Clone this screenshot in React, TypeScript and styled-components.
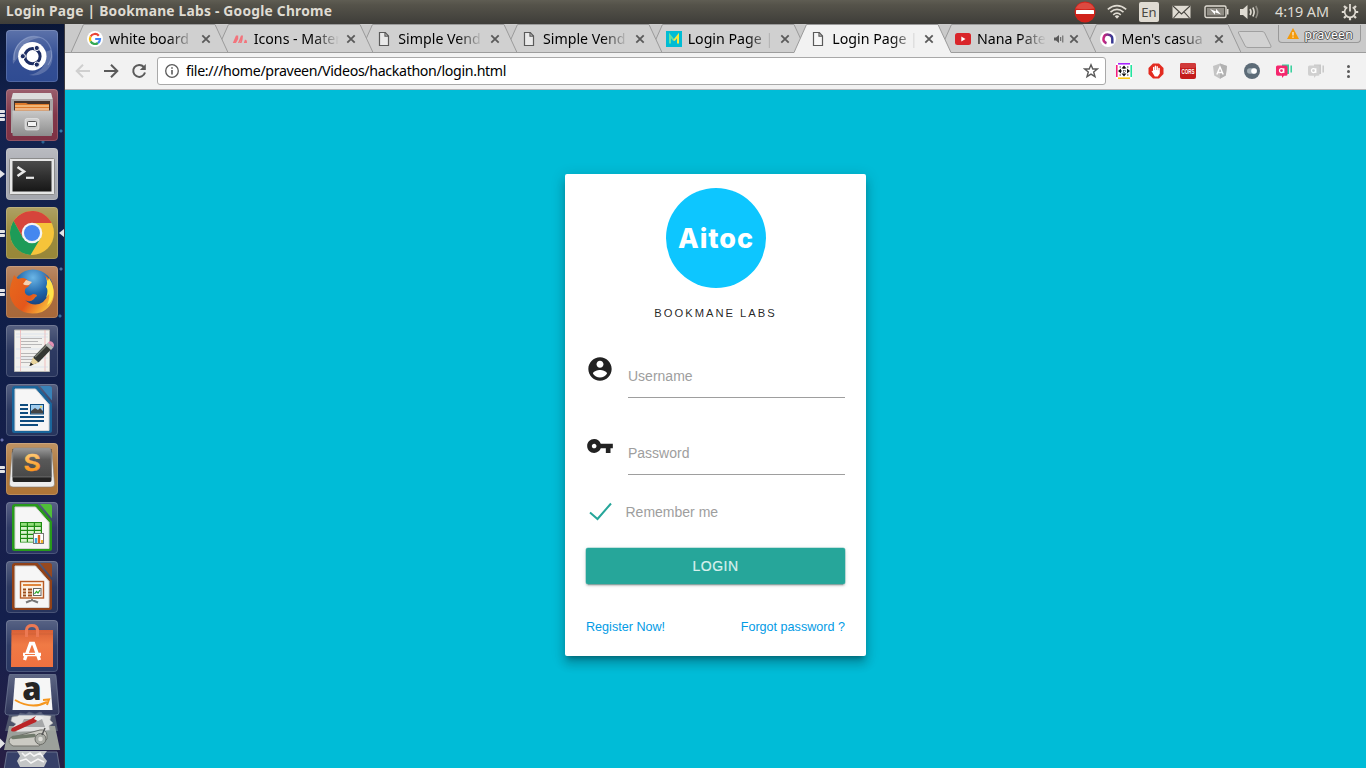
import React from "react";
import styled, { createGlobalStyle, css } from "styled-components";

const GlobalStyle = createGlobalStyle`
  * { box-sizing: border-box; }
  html, body { margin: 0; padding: 0; }
  body { overflow: hidden; font-family: "Liberation Sans", Arial, sans-serif; }
  svg { display: block; flex: none; }
`;

const uiFont = css`
  font-family: "Noto Sans", "Open Sans", sans-serif;
`;

const Desktop = styled.div`
  width: 1366px;
  height: 768px;
  display: flex;
  flex-direction: column;
  background: #00bcd7;
`;

/* ---------- top panel ---------- */

const Panel = styled.header`
  ${uiFont}
  height: 24px;
  flex: none;
  display: flex;
  align-items: center;
  justify-content: space-between;
  padding: 0 7px 0 6px;
  background: linear-gradient(#5f5d53, #55534a 20%, #3e3d39);
  color: #dfdbd2;
`;

const WindowTitle = styled.div`
  padding-bottom: 2px;
  font-size: 13.8px;
  font-weight: 700;
  line-height: 20px;
  letter-spacing: 0.22px;
  white-space: nowrap;
`;

const Indicators = styled.div`
  display: flex;
  align-items: center;
`;

const Indicator = styled.div<{ $gap: number }>`
  margin-left: ${(p) => p.$gap}px;
`;

const Language = styled.div`
  width: 20px;
  height: 20px;
  border-radius: 2px;
  background: #dfdbd2;
  color: #4a4842;
  font-size: 13px;
  line-height: 21px;
  text-align: center;
`;

const Clock = styled.div`
  width: 54px;
  font-size: 14.4px;
  line-height: 20px;
  letter-spacing: -0.1px;
  white-space: nowrap;
`;

const Workspace = styled.div`
  flex: 1;
  min-height: 0;
  display: flex;
`;

/* ---------- launcher ---------- */

const Launcher = styled.nav`
  width: 65px;
  flex: none;
  display: flex;
  flex-direction: column;
  padding-top: 6px;
  border-right: 1px solid #3b3a40;
  overflow: hidden;
  background:
    radial-gradient(circle at 61px 107px, #3579a8 0 1px, transparent 2px),
    radial-gradient(circle at 43px 118px, #2d6594 0 1px, transparent 2px),
    radial-gradient(circle at 61px 245px, #52729b 0 1px, transparent 2px),
    radial-gradient(circle at 60px 292px, #3a6f9d 0 1px, transparent 2px),
    radial-gradient(circle at 2px 416px, #6a72b0 0 1px, transparent 2px),
    linear-gradient(#091637, #14234f 12%, #101e48 45%, #191f4c 65%, #14204d 80%, #281f44);
`;

const LaunchRow = styled.div`
  height: 52px;
  flex: none;
  display: flex;
  align-items: center;
  margin-bottom: 7px;
`;

const FoldedApps = styled.div`
  flex: none;
  margin-top: -5px;
`;

const Pips = styled.div`
  width: 6px;
  flex: none;
  display: flex;
  flex-direction: column;
  gap: 1px;
`;

const Pip = styled.i`
  width: 5px;
  height: 3px;
  background: #e3e3e6;
  border-radius: 0 1px 1px 0;
`;

const Arrow = styled.i<{ $left?: boolean }>`
  width: 0;
  height: 0;
  border: 4px solid transparent;
  ${(p) =>
    p.$left
      ? css`border-right: 5px solid #e3e3e6; border-left: 0; margin-left: 1px;`
      : css`border-left: 5px solid #e3e3e6; border-right: 0;`}
`;

const Tile = styled.div<{ $tint: string }>`
  width: 52px;
  height: 52px;
  flex: none;
  border-radius: 4px;
  background: linear-gradient(rgba(255, 255, 255, 0.22), rgba(255, 255, 255, 0.03) 50%, transparent), ${(p) => p.$tint};
  box-shadow: inset 0 0 0 1px rgba(255, 255, 255, 0.16);
`;

/* ---------- browser ---------- */

const Browser = styled.div`
  flex: 1;
  min-width: 0;
  display: flex;
  flex-direction: column;
`;

const TabStrip = styled.div`
  ${uiFont}
  height: 29px;
  flex: none;
  display: flex;
  padding-left: 6px;
  background: #cacaca;
  box-shadow: inset 0 -1px #9d9d9d;
`;

const Tab = styled.div<{ $order: number }>`
  position: relative;
  z-index: ${(p) => p.$order};
  width: 157px;
  height: 29px;
  flex: none;
  display: flex;
  align-items: center;
  padding: 1px 17px 0 16px;
  & + & { margin-left: -12.35px; }
`;

const TabShape = styled.svg`
  position: absolute;
  inset: 0;
  z-index: -1;
`;

const TabLabel = styled.div<{ $width: number }>`
  width: ${(p) => p.$width}px;
  flex: none;
  margin-left: 6px;
  overflow: hidden;
  white-space: nowrap;
  font-size: 14.2px;
  letter-spacing: 0;
  line-height: 20px;
  color: #000;
  mask-image: linear-gradient(to right, #000 calc(100% - 26px), transparent);
`;

const TabTools = styled.div`
  display: flex;
  align-items: center;
  gap: 5px;
  margin-left: auto;
`;

const NewTab = styled.div`
  margin: 6px 0 0 -4px;
`;

const Profile = styled.div`
  width: 83px;
  height: 18px;
  margin: 1px 0 0 5px;
  display: flex;
  align-items: center;
  gap: 6px;
  padding-left: 8px;
  border: 1px solid #999;
  border-top: 0;
  border-radius: 0 0 4px 4px;
  background: #c9c9c9;
`;

const ProfileName = styled.span`
  padding-top: 3px;
  font-size: 12px;
  letter-spacing: 0.35px;
  line-height: 16px;
  color: #fff;
  text-shadow: 1px 0 #555, -1px 0 #555, 0 1px #555, 0 -1px #555;
`;

const Toolbar = styled.div`
  height: 37px;
  flex: none;
  display: flex;
  align-items: center;
  padding: 0 8px 0 8px;
  background: #f2f2f2;
  border-bottom: 1px solid #b6b4b6;
`;

const NavButtons = styled.div`
  display: flex;
  gap: 8px;
`;

const Address = styled.div`
  ${uiFont}
  width: 949px;
  height: 28px;
  margin-left: 8px;
  display: flex;
  align-items: center;
  padding: 0 6px;
  border: 1px solid #a9a9a9;
  border-radius: 3px;
  background: #fff;
`;

const Url = styled.div`
  flex: 1;
  margin-left: 6px;
  font-size: 14.2px;
  line-height: 20px;
  letter-spacing: -0.34px;
  color: #000;
`;

const Extensions = styled.div`
  display: flex;
  gap: 16px;
  margin-left: 10px;
`;

/* ---------- page ---------- */

const Page = styled.main`
  flex: 1;
  display: flex;
  justify-content: center;
  align-items: flex-start;
  padding-top: 84px;
  background: #00bcd7;
`;

const Card = styled.form`
  width: 301px;
  height: 482px;
  display: flex;
  flex-direction: column;
  padding: 14px 21px 0;
  border-radius: 2px;
  background: #fff;
  box-shadow: 0 8px 10px 1px rgba(0, 0, 0, 0.14), 0 3px 14px 2px rgba(0, 0, 0, 0.12), 0 5px 5px -3px rgba(0, 0, 0, 0.3);
`;

const Logo = styled.div`
  width: 100px;
  height: 100px;
  margin: 0 auto;
  border-radius: 50%;
  background: #0dc6ff;
  color: #fff;
  font: 800 27px/101px Inter, sans-serif;
  letter-spacing: 0.9px;
  text-indent: 1px;
  text-align: center;
`;

const Brand = styled.p`
  margin: 17px 0 0;
  font-size: 11.2px;
  line-height: 17px;
  letter-spacing: 2px;
  text-align: center;
  color: rgba(0, 0, 0, 0.87);
`;

const Field = styled.label<{ $top: number }>`
  display: flex;
  justify-content: space-between;
  height: 43px;
  margin-top: ${(p) => p.$top}px;
`;

const FieldInput = styled.span`
  width: 217px;
  height: 43px;
  padding-top: 10px;
  border-bottom: 1px solid #9e9e9e;
  font-size: 14px;
  line-height: 23px;
  color: #9e9e9e;
`;

const Remember = styled.label`
  display: flex;
  align-items: center;
  height: 24px;
  margin-top: 25px;
  gap: 13.5px;
  padding-left: 3px;
  font-size: 14px;
  color: #9e9e9e;
`;

const LoginButton = styled.button`
  width: 259px;
  height: 36px;
  flex: none;
  margin-top: 24px;
  padding: 0;
  border: 0;
  border-radius: 2px;
  background: #26a69a;
  color: #d8f0ed;
  font: 14px/36px "Liberation Sans", Arial, sans-serif;
  letter-spacing: 0.5px;
  -webkit-text-stroke: 0.2px #d8f0ed;
  box-shadow: 0 0 0 0.5px rgba(38, 166, 154, 0.5), 0 2px 2px 0 rgba(0, 0, 0, 0.14), 0 1px 5px 0 rgba(0, 0, 0, 0.12), 0 3px 1px -2px rgba(0, 0, 0, 0.2);
`;

const Links = styled.div`
  display: flex;
  justify-content: space-between;
  margin-top: 34px;
  font-size: 12.6px;
  line-height: 18px;
`;

const Link = styled.a`
  color: #039be5;
`;

/* ---------- launcher drawings ---------- */

const UbuntuIcon = () => (
  <svg width="52" height="52" viewBox="0 0 52 52" fill="none">
    <path d="M8 30C7 14 20 4 33 7C44 10 50 24 42 35" stroke="#b9c8ea" strokeOpacity=".35" strokeWidth="1.2" />
    <path d="M7 34C5 14 20 3 35 8C25 8 16 14 13 26ZM45 20C51 35 38 48 23 45C35 43 42 34 39 22Z" fill="#fff" fillOpacity=".2" />
    <circle cx="26.3" cy="26.3" r="14.2" fill="#fff" />
    <circle cx="26.5" cy="26.2" r="7.6" stroke="#1c2d63" strokeWidth="3" />
    <g fill="#1c2d63" stroke="#fff" strokeWidth="1">
      <circle cx="30.8" cy="18" r="2.6" />
      <circle cx="30.8" cy="34.6" r="2.6" />
      <circle cx="16.8" cy="26.2" r="2.6" />
    </g>
  </svg>
);

const FilesIcon = () => (
  <svg width="52" height="52" viewBox="0 0 52 52">
    <defs>
      <linearGradient id="cab" x1="0" y1="0" x2="0" y2="1"><stop offset="0" stopColor="#c9c9c9" /><stop offset="1" stopColor="#8d8d8d" /></linearGradient>
    </defs>
    <path d="M7 4H45L47 11V44H5V11Z" fill="#a9a5a5" />
    <path d="M7 4H45L46.5 10H5.5Z" fill="#dcdcdc" />
    <rect x="8" y="12" width="36" height="11" fill="#44332b" />
    <path d="M9 14H20L22 15H43V22H9Z" fill="#df7b2b" />
    <path d="M9 17H43" stroke="#f7c98e" strokeWidth="1.5" />
    <path d="M9 20H43" stroke="#fff1dc" strokeWidth="1.2" />
    <rect x="6.5" y="21.5" width="39.5" height="25.5" rx="1" fill="url(#cab)" />
    <rect x="19" y="29.5" width="14" height="11.5" rx="2" fill="#d0d0d0" stroke="#ededed" strokeWidth=".6" />
    <rect x="21.5" y="32.5" width="9" height="5" rx="1" fill="#f3f3f3" stroke="#555" strokeWidth="1" />
  </svg>
);

const TerminalIcon = () => (
  <svg width="52" height="52" viewBox="0 0 52 52" fill="none">
    <defs>
      <linearGradient id="scr" x1="0" y1="0" x2="0" y2="1"><stop offset="0" stopColor="#4b4b4b" /><stop offset=".5" stopColor="#303030" /><stop offset="1" stopColor="#171717" /></linearGradient>
    </defs>
    <rect x="3.5" y="10.5" width="45" height="36" rx="1" fill="#e6e6e6" stroke="#8b8b8b" />
    <rect x="6.5" y="13" width="39" height="30.5" fill="url(#scr)" />
    <path d="M11.5 19L18 23.5L11.5 28" stroke="#e9e9e9" strokeWidth="2.6" />
    <path d="M20 29.8H28" stroke="#e9e9e9" strokeWidth="2.2" />
  </svg>
);

const ChromeIcon = () => (
  <svg width="52" height="52" viewBox="0 0 52 52">
    <circle cx="26" cy="26" r="22" fill="#f6c43a" />
    <path d="M26 26V16H45.6A22 22 0 0 0 7.6 14L17 31Z" fill="#d6453b" />
    <path d="M7.6 14A22 22 0 0 0 24.5 48L34.7 31L26 26L17 31Z" fill="#1d9b58" />
    <circle cx="26" cy="26" r="10.3" fill="#f4f4f4" />
    <circle cx="26" cy="26" r="8" fill="#4587ef" />
  </svg>
);

const FirefoxIcon = () => (
  <svg width="52" height="52" viewBox="0 0 52 52">
    <defs>
      <radialGradient id="ffb" cx=".5" cy=".2" r=".8"><stop offset="0" stopColor="#6bb6e6" /><stop offset=".5" stopColor="#1f66ab" /><stop offset="1" stopColor="#143167" /></radialGradient>
      <linearGradient id="ffo" x1="0" y1="0" x2="1" y2=".6"><stop offset="0" stopColor="#e66a1d" /><stop offset=".6" stopColor="#e4571b" /><stop offset="1" stopColor="#f9b93a" /></linearGradient>
    </defs>
    <circle cx="27" cy="24" r="20.5" fill="url(#ffb)" />
    <path d="M8 9L12 13Q17 11 20 13L25 17L22 21Q18 22 19 27Q22 32 27 28Q31 28 31 30Q29 31 28 33Q24 37 19 34Q28 42 37 36Q45 29 42 18Q41 11 37 8Q46 13 48 24Q49 39 36 46Q20 51 9 40Q1 30 5 18Z" fill="url(#ffo)" />
    <path d="M40 11L42 15L43 12Q49 21 47 31Q45 37 41 39Q44 32 43 28L40 32Q43 24 40 21Q42 17 40 11Z" fill="#ffe34a" />
    <path d="M20 14L26 16L23 19Q19 20 17 18Z" fill="#f4d1b0" />
  </svg>
);

const EditorIcon = () => (
  <svg width="52" height="52" viewBox="0 0 52 52" fill="none">
    <path d="M8.5 5H43.5V46.5H8.5Z" fill="#f2f1ee" stroke="#b7b7b4" />
    <path d="M14.5 5V46M39 5V46" stroke="#f0aaaa" strokeWidth=".7" />
    <path d="M10 9H42M10 12H42M10 24H42M10 33H42M10 42H42" stroke="#c4d5e8" strokeWidth=".5" />
    <path d="M15 13.5H36M15 16.5H32M15 19.5H36M15 22.5H25M15 28.5H33M15 31.5H36M15 34.5H28M15 37.5H25" stroke="#a8a8a8" strokeWidth=".8" />
    <path d="M23.5 41L28 31.5L40 19L45.5 24L33 37Z" fill="#333632" />
    <path d="M29 32L41 20" stroke="#777b70" strokeWidth="1.5" />
    <path d="M23.5 41L27 32.5L32.5 37.5Z" fill="#e9d49c" />
    <path d="M23.5 41L24.8 37.5L27.2 39.7Z" fill="#222" />
    <path d="M39.5 20L42 17.5L47.3 22.5L45 25Z" fill="#b7bab8" />
    <path d="M42 17.5Q45 15 47.3 18Q49 20 47.3 22.5Z" fill="#e391b4" />
  </svg>
);

const DocShell: React.FC<{ color: string; fold: string; children: React.ReactNode }> = ({ color, fold, children }) => (
  <svg width="52" height="52" viewBox="0 0 52 52" fill="none">
    <path d="M9 2H31.5L46 19.5V46.5Q46 49 43.5 49H8.5Q6 49 6 46.5V5Q6 2 9 2Z" fill={color} />
    <path d="M9 5H29.5L43 20.5V46.5H9Z" fill="#f6f6f6" stroke="#d4d4d4" />
    <path d="M34 2H43.5Q46 2 46 4.5V16.5Z" fill={fold} />
    {children}
  </svg>
);

const WriterIcon = () => (
  <DocShell color="#1a659b" fold="#3982b8">
    <path d="M14 21H22M14 25H22M14 29H22M14 33H38M14 37H38M14 41H32" stroke="#0f4c7e" strokeWidth="1.8" />
    <rect x="24.5" y="20.5" width="13" height="9.5" fill="#9fcbed" stroke="#0f4c7e" />
    <path d="M25 29.5V27L29 24L32 26L34 24L37 27V29.5Z" fill="#444" />
    <circle cx="35" cy="22.7" r="1" fill="#f5d64d" />
  </DocShell>
);

const CalcIcon = () => (
  <DocShell color="#279a1b" fold="#4fbf38">
    <rect x="14" y="20" width="22" height="20.5" fill="#1d8a13" />
    {[0, 1, 2, 3, 4].map((r) =>
      [0, 1, 2].map((c) => (
        <rect key={`${r}${c}`} x={15 + c * 7} y={21 + r * 4} width="5.8" height="2.8" fill={r === 0 ? "#92dd7b" : "#d8f3cd"} />
      ))
    )}
    <rect x="27.5" y="31.5" width="10" height="10" fill="#fff" stroke="#777" />
    <path d="M30 41V36" stroke="#3ba4dc" strokeWidth="2.4" />
    <path d="M33 41V33" stroke="#d9651e" strokeWidth="2.4" />
    <path d="M36 41V38" stroke="#f1b62c" strokeWidth="2" />
  </DocShell>
);

const ImpressIcon = () => (
  <DocShell color="#924218" fold="#97491f">
    <rect x="14.5" y="20.5" width="23" height="16.5" fill="#fdf1e4" stroke="#b65a24" strokeWidth="1.4" />
    <path d="M17 24H35" stroke="#e0863d" strokeWidth="2" />
    <path d="M17 28.5H20M22 28.5H26M17 31.5H20M22 31.5H26M17 34.5H20M22 34.5H26" stroke="#9b4d1b" strokeWidth="1.8" />
    <rect x="27.5" y="27.5" width="7.5" height="7" fill="#fff" stroke="#666" />
    <path d="M28.5 33L30.5 30.5L32 32L34 29" stroke="#2aa52a" strokeWidth="1.2" />
    <path d="M26 38V39L20 41.5M26 39L32 41.5" stroke="#777" strokeWidth="2" />
  </DocShell>
);

const SublimeIcon = () => (
  <svg width="52" height="52" viewBox="0 0 52 52">
    <defs>
      <linearGradient id="key" x1="0" y1="0" x2="0" y2="1"><stop offset="0" stopColor="#9a9a9a" /><stop offset=".4" stopColor="#595959" /><stop offset="1" stopColor="#484848" /></linearGradient>
      <linearGradient id="sg" x1="0" y1="0" x2="0" y2="1"><stop offset="0" stopColor="#ffd68a" /><stop offset="1" stopColor="#ff8600" /></linearGradient>
    </defs>
    <path d="M6 9L3.5 41Q3.5 44 7 44H45Q48.500 44 48.500 41L46 9Z" fill="#ededed" stroke="#817b72" strokeWidth=".6" />
    <path d="M6.5 6H45.5V37Q45.500 39 44 39H8Q6.500 39 6.500 37Z" fill="#222" />
    <path d="M9 5H43Q45 5 45 7L45.700 34H6.300L7 7Q7 5 9 5Z" fill="url(#key)" stroke="#8a8a8a" strokeWidth=".6" />
    <text x="26" y="28" textAnchor="middle" fontFamily="Inter, sans-serif" fontSize="23" fontWeight="600" fill="url(#sg)" stroke="url(#sg)" strokeWidth=".4" transform="translate(-3.9 0) scale(1.15 1)">S</text>
  </svg>
);

const SoftwareIcon = () => (
  <svg width="52" height="52" viewBox="0 0 52 52" fill="none">
    <defs>
      <linearGradient id="bag" x1="0" y1="0" x2="0" y2="1"><stop offset="0" stopColor="#d96137" /><stop offset=".4" stopColor="#f07a45" /><stop offset="1" stopColor="#ef7140" /></linearGradient>
    </defs>
    <path d="M5.5 10H47V47H5Z" fill="url(#bag)" />
    <path d="M5 14H47" stroke="#c95e37" strokeWidth=".7" />
    <path d="M20.5 17V10Q21 5.500 26 5.500Q31 5.500 31.500 10V17" stroke="#ec7953" strokeWidth="3" />
    <path d="M18.5 40L24.5 23.500H27.500L33.500 40M17 34.500H35" stroke="#fff" strokeWidth="3.3" />
    <path d="M19 34.500H29" stroke="#f07a45" strokeWidth="1" />
  </svg>
);

const LauncherStack = () => (
  <svg width="64" height="96" viewBox="0 0 64 96" fill="none">
    <defs>
      <linearGradient id="plate" x1="0" y1="0" x2="0" y2="1"><stop offset="0" stopColor="#757f98" /><stop offset="1" stopColor="#333c60" /></linearGradient>
    </defs>
    <path d="M7 78H57L60 96H4Z" fill="#39466e" fillOpacity=".85" stroke="#69728c" />
    <path d="M17 77H47L43 82L47 87L44 93H20L17 87L20 82Z" fill="#c4c6c7" />
    <path d="M22 79L25 82L30 79L34 82L40 79L43 83M20 87L26 85L31 89L38 85L44 88" stroke="#f6f6f6" strokeWidth="1.5" />
    <path d="M9 41H55L58 57H5Z" fill="#4d546b" />
    <path d="M9 52H55L60 76H4Z" fill="#a2a8a0" fillOpacity=".95" />
    <path d="M12 43L18 42L20 39L26 40L29 38L35 40L40 38L44 41L51 42L50 46L53 49L49 52L50 56L44 57L17 58L12 54L16 50L11 47Z" fill="#e0e0e0" stroke="#aaa" strokeWidth=".6" />
    <path d="M24 45H42L45 53H20Z" fill="#a5a6a8" />
    <path d="M12 54L31 45L36 42L38 44L36 48L16 57Q9 59 12 54Z" fill="#bb2427" />
    <path d="M34 45L37 40L42 38L40 42L44 44L38 47Z" fill="#ececec" />
    <path d="M13 63L40 56Q46 55 47 61V65L39 72H13Q7 69 10 64Z" fill="#cbcac3" stroke="#72736d" strokeWidth="1" />
    <path d="M13 63.500L34 61.500" stroke="#717a6c" strokeWidth="3.5" strokeLinecap="round" />
    <circle cx="40.5" cy="65" r="5.5" fill="#a9aba4" stroke="#6b6c67" />
    <circle cx="40.5" cy="65" r="2.3" fill="#deddd7" />
    <path d="M42 61L45 54" stroke="#555" strokeWidth="1.5" />
    <path d="M10 0H54Q56 0 56 2L59 38Q59 41 56 41H8Q5 41 5 38L9 2Z" fill="url(#plate)" fillOpacity=".75" stroke="#747e98" strokeOpacity=".7" />
    <path d="M15 4H50L52.500 36H12.500Z" fill="#f6f6f6" />
    <text x="32" y="26" textAnchor="middle" fontFamily="Open Sans, sans-serif" fontWeight="800" fontSize="31" fill="#252525">a</text>
    <path d="M15 26Q32 36 47 28M43 26L49 25.500L47 31" stroke="#f5961e" strokeWidth="2" />
    <path d="M0 64.500L5 69.500L0 74.500Z" fill="#e2e2e4" />
  </svg>
);

/* ---------- panel drawings ---------- */

const NoEntry = () => (
  <svg width="22" height="22" viewBox="0 0 22 22">
    <circle cx="11" cy="11" r="10.5" fill="#d0221a" />
    <path d="M1.5 7.5A10.5 10.5 0 0 1 20.5 7.5Q11 9 1.5 7.5Z" fill="#dd4a40" />
    <rect x="2" y="9" width="18" height="4" rx=".5" fill="#fff" />
  </svg>
);

const Wifi = () => (
  <svg width="20" height="16" viewBox="0 0 20 16" fill="none" stroke="#dfdbd2" strokeWidth="1.7">
    <path d="M.8 5.3Q10-2 19.200 5.300M3.500 8.100Q10 2.700 16.500 8.100M6.200 10.800Q10 7.500 13.800 10.800" />
    <path d="M7.7 12.3Q10 10.300 12.300 12.300L10 14.700Z" fill="#dfdbd2" stroke="none" />
  </svg>
);

const Mail = () => (
  <svg width="19" height="14" viewBox="0 0 19 14">
    <rect x=".5" y=".8" width="18" height="12.4" fill="#dfdbd2" />
    <path d="M1 1L9.500 9L18 1M1.500 13L7 6.800M17.500 13L12 6.800" stroke="#484640" strokeWidth="1.1" fill="none" />
  </svg>
);

const Battery = () => (
  <svg width="25" height="14" viewBox="0 0 25 14">
    <rect x="1" y="1" width="21" height="11.5" rx="1.5" fill="none" stroke="#dfdbd2" strokeWidth="1.4" />
    <rect x="3" y="3" width="17" height="7.5" fill="#8f8c84" />
    <path d="M23 4H24.500V9.500H23Z" fill="#dfdbd2" />
    <path d="M6 4L12 6.500L12 3.800L17 9.500L11 7.200V9.800Z" fill="#fff" />
  </svg>
);

const Volume = () => (
  <svg width="20" height="16" viewBox="0 0 20 16" fill="none" strokeWidth="1.6">
    <path d="M0 5H3L7.500 1V15L3 11H0Z" fill="#dfdbd2" />
    <path d="M10 5Q12 8 10 11M12.800 3.500Q15.500 8 12.800 12.500" stroke="#dfdbd2" />
    <path d="M15.800 2Q19.500 8 15.800 14" stroke="#8d8a82" />
  </svg>
);

const Gear = () => (
  <svg width="18" height="18" viewBox="0 0 18 18" fill="none" stroke="#dfdbd2">
    <path d="M3 3L4.800 4.800M15 3L13.200 4.800M.8 9H3.500M17.200 9H14.500M3 15L4.800 13.200M15 15L13.200 13.200M9 17.300V14.500" strokeWidth="2.2" />
    <path d="M6.300 4.200A5.400 5.400 0 1 0 11.700 4.200" strokeWidth="1.7" />
    <path d="M9 1V8.500" strokeWidth="1.8" />
  </svg>
);

/* ---------- browser drawings ---------- */

const GoogleIcon = () => (
  <svg width="16" height="16" viewBox="0 0 16 16" fill="none" strokeWidth="2.2">
    <circle cx="8" cy="8" r="8" fill="#fff" />
    <path d="M11.800 4.700A5 5 0 0 0 3.600 5.600" stroke="#ea4335" />
    <path d="M3.600 5.600A5 5 0 0 0 3.600 10.400" stroke="#fbbc05" />
    <path d="M3.600 10.400A5 5 0 0 0 11 12" stroke="#34a853" />
    <path d="M11 12A5 5 0 0 0 13 8H8.200" stroke="#4285f4" />
  </svg>
);

const MaterializeIcon = () => (
  <svg width="16" height="16" viewBox="0 0 16 16" fill="#f2747c">
    <path d="M.8 12L4 4.500H6.200V8L4 12H2.500L4 8.500L2.800 12ZM6 12L9 4.500H11L10.500 9L9.500 12H8L8.500 9L7.500 12ZM11.800 12L13 8.500L14.800 9.500L15 12Z" />
  </svg>
);

const PageIcon = () => (
  <svg width="16" height="16" viewBox="0 0 16 16" fill="none" stroke="#5a5a5a" strokeWidth="1.2">
    <path d="M3.500 1.500H9.300L12.500 5V14.500H3.500Z" fill="#fafafa" fillOpacity=".6" />
    <path d="M9 1.500V5.200H12.500" />
  </svg>
);

const MFavicon = () => (
  <svg width="16" height="16" viewBox="0 0 16 16" fill="none" strokeWidth="2">
    <rect width="16" height="16" fill="#00bcd4" />
    <path d="M4 12.500V4.500L8 9.500" stroke="#68e0a0" />
    <path d="M8 9.500L12 4.500V12.500" stroke="#f5e73b" />
  </svg>
);

const YouTubeIcon = () => (
  <svg width="16" height="16" viewBox="0 0 16 16">
    <rect y="2" width="16" height="12" rx="2.5" fill="#d9252a" />
    <path d="M6.300 5.500L10.500 8L6.300 10.500Z" fill="#fff" />
  </svg>
);

const ShopIcon = () => (
  <svg width="16" height="16" viewBox="0 0 16 16" fill="none">
    <defs>
      <linearGradient id="shop" x1="0" y1="0" x2="1" y2="0"><stop offset="0" stopColor="#cc2680" /><stop offset="1" stopColor="#343a93" /></linearGradient>
    </defs>
    <circle cx="8" cy="8" r="8" fill="#fff" />
    <path d="M6.500 12.200A4.400 4.400 0 1 1 12.300 8V12.500" stroke="url(#shop)" strokeWidth="2.5" />
  </svg>
);

const CloseIcon = () => (
  <svg width="10" height="10" viewBox="0 0 10 10" stroke="#5a5a5a" strokeWidth="1.8">
    <path d="M1.300 1.300L8.700 8.700M8.700 1.300L1.300 8.700" />
  </svg>
);

const AudioIcon = () => (
  <svg width="10" height="10" viewBox="0 0 10 10" fill="none" stroke="#5a5a5a">
    <path d="M0 3.500H2L5 1V9L2 6.500H0Z" fill="#5a5a5a" stroke="none" />
    <path d="M6.700 3V7M8.800 1.500V8.500" />
  </svg>
);

const BackIcon: React.FC<{ color: string; flip?: boolean }> = ({ color, flip }) => (
  <svg width="20" height="20" viewBox="0 0 20 20" fill="none" stroke={color} strokeWidth="2">
    <path d={flip ? "M3 10H16M10 3.700L16.300 10L10 16.300" : "M17 10H4M10 3.700L3.700 10L10 16.300"} />
  </svg>
);

const ReloadIcon = () => (
  <svg width="20" height="20" viewBox="0 0 20 20" fill="none">
    <path d="M14.800 6A6 6 0 1 0 16 11.500" stroke="#5a5a5a" strokeWidth="2" />
    <path d="M16.800 3V9H10.800Z" fill="#5a5a5a" />
  </svg>
);

const InfoIcon = () => (
  <svg width="16" height="16" viewBox="0 0 16 16" fill="none" stroke="#5a5a5a">
    <circle cx="8" cy="8" r="6.3" strokeWidth="1.3" />
    <path d="M8 7V11.500M8 4.200V5.800" strokeWidth="1.6" />
  </svg>
);

const StarIcon = () => (
  <svg width="16" height="16" viewBox="0 0 16 16" fill="none" stroke="#5a5a5a" strokeWidth="1.4">
    <path d="M8 1.800L9.800 6H14.300L10.700 9L12 13.700L8 11.100L4 13.700L5.300 9L1.700 6H6.200Z" />
  </svg>
);

const MoveExtension = () => (
  <svg width="16" height="16" viewBox="0 0 16 16" fill="none" strokeWidth="1.5">
    <rect width="16" height="16" fill="#fff" />
    <path d="M2 .8H14" stroke="#a319ff" /><path d="M2 15.200H14" stroke="#ffc400" />
    <path d="M.8 2V14" stroke="#f51477" /><path d="M15.200 2V14" stroke="#17e49a" />
    <path d="M8 5V11M5 8H11" stroke="#222" strokeDasharray="1 1" strokeWidth="1" />
    <path d="M8 2.500L10.500 5.500H5.500ZM8 13.500L5.500 10.500H10.500ZM2 8L5 5.500V10.500ZM14 8L11 10.500V5.500Z" fill="#111" />
    <path d="M3.500 4H5M11 4H12.500M3.500 12H5M11 12H12.500" stroke="#333" strokeWidth="1" />
  </svg>
);

const AdBlock = () => (
  <svg width="16" height="16" viewBox="0 0 16 16">
    <path d="M5 .5H11L15.500 5V11L11 15.500H5L.5 11V5Z" fill="#e32b20" />
    <path d="M3.500 8Q4.300 7.300 5 8.300V4.200Q5.600 3.400 6.300 4.200V7H6.700V3Q7.400 2.200 8.100 3V7H8.500V3.500Q9.200 2.700 9.900 3.500V7.300H10.300V5Q11.500 4.300 11.800 5.500V10.500L9.800 13.500H6.800Z" fill="#fff" />
  </svg>
);

const Cors = () => (
  <svg width="16" height="16" viewBox="0 0 16 16">
    <rect width="16" height="16" rx="2" fill="#c41c1c" />
    <rect width="16" height="5" rx="2" fill="#d03a3a" />
    <text x="8" y="10.5" textAnchor="middle" textLength="13" lengthAdjust="spacingAndGlyphs" fontFamily="Liberation Sans, sans-serif" fontWeight="700" fontSize="7" fill="#fff">CORS</text>
  </svg>
);

const AngularExt = () => (
  <svg width="16" height="16" viewBox="0 0 16 16" fill="none">
    <path d="M8 .5L15 3L13.800 12.500L8 15.800L2.200 12.500L1 3Z" fill="#c4c4c4" />
    <path d="M8 .5L15 3L13.800 12.500L8 15.800Z" fill="#b2b2b2" />
    <path d="M4.800 11.500L8 4L11.200 11.500M6 9.500H10" stroke="#fff" strokeWidth="1.4" />
  </svg>
);

const ToggleExt = () => (
  <svg width="16" height="16" viewBox="0 0 16 16">
    <circle cx="8" cy="8" r="8" fill="#5c6b77" />
    <rect x="3" y="5.2" width="10" height="5.6" rx="2.8" fill="#9fadb5" />
    <circle cx="10" cy="8" r="2.8" fill="#fff" />
  </svg>
);

const ChatExt: React.FC<{ front: string; back: string }> = ({ front, back }) => (
  <svg width="16" height="16" viewBox="0 0 16 16" fill="none">
    <path d="M6 1.500H13V11H6Z" fill={back} />
    <path d="M15.200 2.500V9.500" stroke={back} strokeWidth="1.5" />
    <path d="M1.500 2.500H10Q11.500 2.500 11.500 4V11.500Q11.500 12.800 10 12.800H8L6 15V12.800H1.500Q0 12.800 0 11V4Q0 2.500 1.500 2.500Z" fill={front} />
    <circle cx="5.5" cy="7.6" r="2" stroke="#fff" strokeWidth="1.2" />
    <path d="M7.800 5.200V10" stroke="#fff" strokeWidth="1.2" />
  </svg>
);

const MenuIcon = () => (
  <svg width="16" height="16" viewBox="0 0 16 16" fill="#5a5a5a">
    <circle cx="8.5" cy="3.5" r="1.5" /><circle cx="8.5" cy="8.5" r="1.5" /><circle cx="8.5" cy="13.5" r="1.5" />
  </svg>
);

/* ---------- data ---------- */

const apps: { icon: React.ReactNode; tint: string; windows: number; focused?: boolean }[] = [
  { icon: <UbuntuIcon />, tint: "#2f4b92", windows: 0 },
  { icon: <FilesIcon />, tint: "#7e3144", windows: 3 },
  { icon: <TerminalIcon />, tint: "#a6a8af", windows: 1 },
  { icon: <ChromeIcon />, tint: "#988738", windows: 2, focused: true },
  { icon: <FirefoxIcon />, tint: "#a8683a", windows: 2 },
  { icon: <EditorIcon />, tint: "#27345d", windows: 0 },
  { icon: <WriterIcon />, tint: "#27345d", windows: 0 },
  { icon: <SublimeIcon />, tint: "#ae7538", windows: 2 },
  { icon: <CalcIcon />, tint: "#2a3562", windows: 0 },
  { icon: <ImpressIcon />, tint: "#27345d", windows: 0 },
  { icon: <SoftwareIcon />, tint: "#293762", windows: 0 },
];

const tabs: { title: string; icon: React.ReactNode; active?: boolean; audio?: boolean }[] = [
  { title: "white board", icon: <GoogleIcon /> },
  { title: "Icons - Mater", icon: <MaterializeIcon /> },
  { title: "Simple Vend", icon: <PageIcon /> },
  { title: "Simple Vend", icon: <PageIcon /> },
  { title: "Login Page |", icon: <MFavicon /> },
  { title: "Login Page |", icon: <PageIcon />, active: true },
  { title: "Nana Pate", icon: <YouTubeIcon />, audio: true },
  { title: "Men's casua", icon: <ShopIcon /> },
];

export default function App() {
  return (
    <Desktop>
      <GlobalStyle />
      <Panel>
        <WindowTitle>Login Page | Bookmane Labs - Google Chrome</WindowTitle>
        <Indicators>
          <Indicator $gap={0}><NoEntry /></Indicator>
          <Indicator $gap={11}><Wifi /></Indicator>
          <Indicator $gap={12}><Language>En</Language></Indicator>
          <Indicator $gap={13}><Mail /></Indicator>
          <Indicator $gap={13}><Battery /></Indicator>
          <Indicator $gap={11}><Volume /></Indicator>
          <Indicator $gap={15}><Clock>4:19 AM</Clock></Indicator>
          <Indicator $gap={12}><Gear /></Indicator>
        </Indicators>
      </Panel>
      <Workspace>
        <Launcher>
          {apps.map((app, i) => (
            <LaunchRow key={i}>
              <Pips>
                {app.windows === 1 ? <Arrow /> : Array.from({ length: app.windows }, (_, n) => <Pip key={n} />)}
              </Pips>
              <Tile $tint={app.tint}>{app.icon}</Tile>
              {app.focused && <Arrow $left />}
            </LaunchRow>
          ))}
          <FoldedApps><LauncherStack /></FoldedApps>
        </Launcher>
        <Browser>
          <TabStrip>
            {tabs.map((tab, i) => (
              <Tab key={i} $order={tab.active ? 20 : 10 - i}>
                <TabShape width="157" height="29" viewBox="0 0 157 29">
                  <path d="M0 28.500L12.500 .5H144L157 28.500" fill={tab.active ? "#f2f2f2" : "#d0d0d0"} stroke="#9a9a9a" />
                  {tab.active ? <path d="M.5 28.500H156.500" stroke="#f2f2f2" /> : <path d="M0 28.500H157" stroke="#9d9d9d" />}
                </TabShape>
                {tab.icon}
                <TabLabel $width={tab.audio ? 69 : 85}>{tab.title}</TabLabel>
                <TabTools>
                  {tab.audio && <AudioIcon />}
                  <CloseIcon />
                </TabTools>
              </Tab>
            ))}
            <NewTab>
              <svg width="36" height="19" viewBox="0 0 36 19">
                <path d="M2.500 1.500H25Q27 1.500 27.700 3L34 16Q34.500 17.500 33 17.500H11Q9 17.500 8.200 16L1.500 3Q1 1.500 2.500 1.500Z" fill="#d2d2d2" stroke="#a0a0a0" />
              </svg>
            </NewTab>
            <Profile>
              <svg width="12" height="11" viewBox="0 0 12 11"><path d="M6 0L12 11H0Z" fill="#f39a0c" /><path d="M6 4V7.500M6 8.500V9.700" stroke="#fff" strokeWidth="1.1" /></svg>
              <ProfileName>praveen</ProfileName>
            </Profile>
          </TabStrip>
          <Toolbar>
            <NavButtons>
              <BackIcon color="#cfcfcf" />
              <BackIcon color="#5a5a5a" flip />
              <ReloadIcon />
            </NavButtons>
            <Address>
              <InfoIcon />
              <Url>file:///home/praveen/Videos/hackathon/login.html</Url>
              <StarIcon />
            </Address>
            <Extensions>
              <MoveExtension />
              <AdBlock />
              <Cors />
              <AngularExt />
              <ToggleExt />
              <ChatExt front="#f5276d" back="#32cf9b" />
              <ChatExt front="#d0d0d0" back="#c8c8c8" />
              <MenuIcon />
            </Extensions>
          </Toolbar>
          <Page>
            <Card>
              <Logo>Aitoc</Logo>
              <Brand>BOOKMANE LABS</Brand>
              <Field $top={33}>
                <svg width="28" height="28" viewBox="0 0 24 24" fill="#222"><path d="M12 2C6.480 2 2 6.480 2 12s4.480 10 10 10 10-4.480 10-10S17.520 2 12 2zm0 3c1.660 0 3 1.340 3 3s-1.340 3-3 3-3-1.340-3-3 1.340-3 3-3zm0 14.200c-2.500 0-4.710-1.280-6-3.220.030-1.990 4-3.080 6-3.080 1.990 0 5.970 1.090 6 3.080-1.290 1.940-3.500 3.220-6 3.220z" /></svg>
                <FieldInput>Username</FieldInput>
              </Field>
              <Field $top={34}>
                <svg width="28" height="28" viewBox="0 0 24 24" fill="#222"><path d="M12.650 10C11.830 7.670 9.610 6 7 6c-3.310 0-6 2.690-6 6s2.690 6 6 6c2.610 0 4.830-1.670 5.650-4H17v4h4v-4h2v-4H12.650zM7 14c-1.100 0-2-.900-2-2s.900-2 2-2 2 .900 2 2-.900 2-2 2z" /></svg>
                <FieldInput>Password</FieldInput>
              </Field>
              <Remember>
                <svg width="23" height="20" viewBox="0 0 23 20" fill="none" stroke="#26a69a" strokeWidth="2"><path d="M1 10.500L8.500 17L22 1.500" /></svg>
                Remember me
              </Remember>
              <LoginButton type="button">LOGIN</LoginButton>
              <Links>
                <Link>Register Now!</Link>
                <Link>Forgot password ?</Link>
              </Links>
            </Card>
          </Page>
        </Browser>
      </Workspace>
    </Desktop>
  );
}
